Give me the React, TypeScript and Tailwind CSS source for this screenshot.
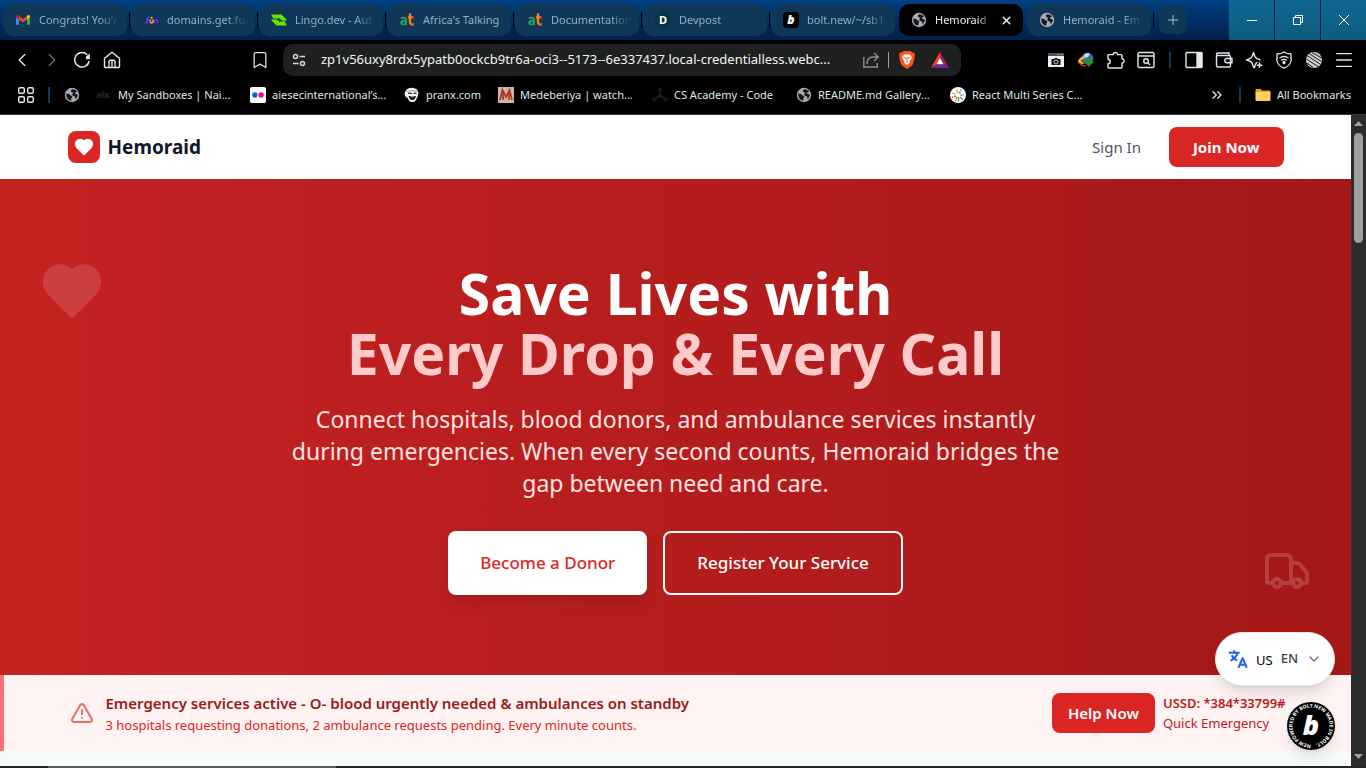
import React from 'react';
import {
  Bookmark,
  ChevronDown,
  ChevronLeft,
  ChevronRight,
  ChevronsRight,
  Menu,
  Plus,
  TriangleAlert,
  Truck,
  X,
} from 'lucide-react';

interface IconProps {
  className?: string;
}

const HeartIcon = ({ className }: IconProps) => (
  <svg viewBox="0 0 24 24" fill="currentColor" stroke="currentColor" strokeWidth="2" strokeLinecap="round" strokeLinejoin="round" className={className}>
    <path d="M19 14c1.49-1.46 3-3.21 3-5.5A5.5 5.5 0 0 0 16.5 3c-1.76 0-3 .5-4.5 2-1.5-1.5-2.74-2-4.5-2A5.5 5.5 0 0 0 2 8.5c0 2.3 1.5 4.05 3 5.5l7 7Z" />
  </svg>
);

const TranslateIcon = ({ className }: IconProps) => (
  <svg viewBox="0 0 24 24" fill="none" stroke="currentColor" strokeWidth="2.5" strokeLinejoin="round" className={className}>
    <path d="M1 4.500h13M7.500 1.500v3M11.500 4.500q-1.500 6-8.500 9.500M4.500 7.500q2 4.500 6.500 6" />
    <path d="M12.500 22.500L17.500 11l5 11.500M14.300 18.800h6.400" />
  </svg>
);

const GlobeIcon = () => (
  <svg viewBox="0 0 16 16" className="size-4 shrink-0">
    <circle cx="8" cy="8" r="7.2" fill="#a7abb1" />
    <path d="M2.3 6.6c1.6.2 3 .4 3.8 1.5.6.9 1.9.6 2.1 1.6.2 1-1.2 1.3-1 2.6l.2 1.5C4.400 13.500 2 11 2.300 6.600z" fill="#15191f" />
    <path d="M8.200 2.200c2 0 3.600.9 4.700 2.300-.5.9-1.500.6-2 1.300-.4.800.9 1.200 1.700 1.200.7.100 1.200.6 1.200 1.300-.3 1.700-1.200 3-2.300 3.900-.2-1.200.3-2-.6-2.700-.9-.6-2.300-.4-2.600-1.500-.3-1.200 1-1.400.6-2.300-.3-.7-1.600-.3-1.900-1.300-.2-.9.300-1.700 1.200-2.200z" fill="#15191f" />
  </svg>
);

const GmailIcon = () => (
  <svg viewBox="0 0 16 16" className="size-4 shrink-0">
    <path d="M1 4.500v8.300h3V7z" fill="#4285f4" />
    <path d="M15 4.500v8.300h-3V7z" fill="#34a853" />
    <path d="M12 4l1.300-.9C14.300 2.500 15 3.300 15 4.200v1L12 7.500z" fill="#fbbc04" />
    <path d="M4 4l-1.300-.9C1.700 2.500 1 3.300 1 4.200v1l3 2.300z" fill="#c5221f" />
    <path d="M4 4l4 3 4-3v3.500l-4 3-4-3z" fill="#ea4335" />
  </svg>
);

const FunIcon = () => (
  <svg viewBox="0 0 16 16" className="size-4 shrink-0" fill="none" strokeWidth="1.600">
    <path d="M4 11.500l.8-5.500Q5 4.700 6.500 5M3.300 7.500h2.700" stroke="#6a35ff" />
    <path d="M7.300 7.500v2q0 1.500 1.400 1.500t1.400-1.500v-2" stroke="#ff9c2e" />
    <circle cx="8.700" cy="5.800" r="1" fill="#ffd02e" />
    <path d="M11.800 11.500V9q0-1.500 1.400-1.500T14.600 9v2.500" stroke="#5d2ee8" />
    <circle cx="2" cy="11" r=".6" fill="#6a35ff" />
  </svg>
);

const LingoIcon = () => (
  <svg viewBox="0 0 16 16" className="size-4 shrink-0">
    <path d="M0 2.500h10.500L16 8l-2.500 1L16 13.500H5.500L0 8l2.600-1z" fill="#68e300" />
    <path d="M5.500 8L8 5.800 9 7.300l2.300.7L8.500 10.300l-.8-1.700z" fill="#10395b" />
    <path d="M2.600 7h4M13.500 9h-4" stroke="#10395b" strokeWidth=".8" />
  </svg>
);

const AfricaIcon = () => (
  <svg viewBox="0 0 16 16" className="size-4 shrink-0" fill="none">
    <path d="M1.800 6.500Q5.500 4.800 7 7.500V13M7 9Q2 8.500 2 11q.5 2.300 5 .8" stroke="#2f9a57" strokeWidth="1.900" />
    <path d="M11 1.500V10q0 3 4 2.500M8.800 5.300h6" stroke="#f58220" strokeWidth="2.300" />
    <path d="M13 4.200h2v2.300h-2zM13.500 11.400H15v2h-1.500z" fill="#e8332d" />
  </svg>
);

const DevpostIcon = () => (
  <span className="grid size-4 shrink-0 place-items-center rounded-full bg-[#083347] text-[11px] font-bold text-white">D</span>
);

const BoltIcon = () => (
  <span className="grid size-4 shrink-0 place-items-center rounded-sm bg-black text-[12px] leading-4 font-black text-white italic">b</span>
);

const AlxIcon = () => (
  <span className="w-4 shrink-0 text-[9px] font-bold text-[#26282b]">alx</span>
);

const FlickrIcon = () => (
  <svg viewBox="0 0 16 16" className="size-4 shrink-0">
    <rect width="16" height="16" rx="2" fill="#fff" />
    <circle cx="4.900" cy="8" r="2.700" fill="#0063dc" />
    <circle cx="11.100" cy="8" r="2.700" fill="#ff0084" />
  </svg>
);

const PranxIcon = () => (
  <svg viewBox="0 0 16 16" className="size-4 shrink-0">
    <path d="M1 5Q3 .8 8 .8q5.500.2 6.500 5-.5 5-3 8-1.500 1.700-4 1.200Q4.500 14 3.500 11 .5 9.500 .7 6.500z" fill="#f4f4f4" />
    <path d="M4 6.500q2-1.200 4 .2M9.500 6.500q1.500-1 3 0M5 9.500q3.500 1.500 6.500 0-.8 3-3.300 3.200Q5.700 12.500 5 9.500z" stroke="#111" strokeWidth="1" fill="#222" />
    <path d="M2 4.500Q8 2.500 13.500 4.500" stroke="#777" fill="none" strokeWidth=".7" />
  </svg>
);

const MedeberiyaIcon = () => (
  <svg viewBox="0 0 16 16" className="size-4 shrink-0">
    <rect width="16" height="16" fill="#c9b7a2" />
    <path d="M2 13L4.500 3 8 10l3.500-7L14 13M5 13V6M11 13V6" stroke="#b3342c" strokeWidth="1.700" fill="none" />
  </svg>
);

const AcademyIcon = () => (
  <svg viewBox="0 0 16 16" className="size-4 shrink-0" fill="none" stroke="#1d1f21" strokeWidth="1.300">
    <circle cx="8" cy="3" r="1.500" />
    <path d="M8 4.500v3L3 12M8 7.500l5 4.500M6 9.500h4" />
    <circle cx="2.500" cy="12.500" r="1.500" />
    <circle cx="13.500" cy="12.500" r="1.500" />
  </svg>
);

const SeriesIcon = () => (
  <svg viewBox="0 0 16 16" className="size-4 shrink-0" fill="none" strokeWidth="1.500">
    <circle cx="8" cy="8" r="8" fill="#fff" />
    <path d="M8 6.500L6.500 2.500M5.500 7L2 6" stroke="#f2b632" />
    <path d="M9.500 6.500l1.500-4M10.500 8.500l3.500-1" stroke="#3d8fe0" strokeDasharray="2 1" />
    <path d="M6 9l-4 1.500M7 10.500L5 14" stroke="#e0483d" strokeDasharray="2 1" />
    <path d="M8.500 10v4.500M10 10l3 2.500" stroke="#4fb160" />
  </svg>
);

const FolderIcon = () => (
  <svg viewBox="0 0 16 16" className="size-4 shrink-0">
    <path d="M.5 3q0-1 1-1h4l1.500 1.600h7.500q1 0 1 1V7H.5z" fill="#e0a422" />
    <path d="M.5 6q0-1 1-1h13q1 0 1 1v7q0 1-1 1h-13q-1 0-1-1z" fill="#ffd05c" />
  </svg>
);

const ReloadIcon = () => (
  <svg viewBox="0 0 18 18" className="size-[18px]" fill="none" stroke="currentColor" strokeWidth="1.500">
    <path d="M14.200 3.600A7.300 7.300 0 1 0 16.200 10" />
    <path d="M16.800 2.600v5.600h-3.600q-.8-1.700 0-3z" fill="currentColor" stroke="none" />
  </svg>
);

const HomeIcon = () => (
  <svg viewBox="0 0 18 18" className="size-[18px]" fill="none" stroke="currentColor" strokeWidth="1.400" strokeLinejoin="round">
    <path d="M1.500 7.300L9 1.200l7.500 6.100v8.200q0 1-1 1h-13q-1 0-1-1z" />
    <path d="M6 16.500V10.300q0-1 1-1h4q1 0 1 1v6.200M9 9.300v7" />
  </svg>
);

const TuneIcon = () => (
  <svg viewBox="0 0 16 16" className="size-4 shrink-0" fill="none" stroke="#d4d7da" strokeWidth="1.500">
    <circle cx="4.500" cy="4.500" r="2" />
    <path d="M8.500 4.500H14M2 11.500h5.500" />
    <circle cx="11.500" cy="11.500" r="2" />
  </svg>
);

const ShareIcon = () => (
  <svg viewBox="0 0 18 18" className="size-[18px]" fill="none" stroke="#8b8f92" strokeWidth="1.400">
    <path d="M1.800 6v10h13.500v-4" />
    <path d="M5 13q0-7 6-7h5M12 2l4.200 4L12 10" />
  </svg>
);

const BraveIcon = () => (
  <svg viewBox="0 0 16 18" className="h-[18px] w-4">
    <path d="M4.500 0h7l1.600 1.600 1.900-.2L16 4l-.6 1.800.3 1.200-2.200 7.200L8 18l-5.500-3.800L.3 7l.3-1.200L0 4l1-2.600 1.900.2z" fill="#fb5421" />
    <path d="M8 3.600l2.300-.4 2.500 2.500-.6 2.600-1.700 1.800.3 1.800L8 14l-2.800-2.100.3-1.800L3.800 8.300l-.6-2.600 2.500-2.500z" fill="#fff" />
    <path d="M4.400 6.200l2.400.8-.2 1.200M11.600 6.200L9.200 7l.2 1.200M8 6v4.300M6.500 11.400L8 10.300l1.500 1.100" stroke="#fb5421" strokeWidth=".9" fill="none" />
  </svg>
);

const BatIcon = () => (
  <svg viewBox="0 0 18 16" className="h-4 w-[18px]">
    <path d="M9 0v6L5.500 12.300 0 16z" fill="#ff4724" />
    <path d="M9 0l9 16-5.500-3.700L9 6z" fill="#9e1f63" />
    <path d="M0 16l5.500-3.700h7L18 16z" fill="#662d91" />
    <path d="M9 6l3.500 6.300h-7z" fill="#fff" />
  </svg>
);

const CaptureIcon = () => (
  <svg viewBox="0 0 16 14" className="h-3.5 w-4">
    <rect width="16" height="14" fill="#eef0f2" />
    <rect width="16" height="3" fill="#4c5266" />
    <path d="M9.500 1.500h1.500" stroke="#4ab0f0" strokeWidth="1.500" />
    <path d="M12.500 1.500H15" stroke="#f0503c" strokeWidth="1.500" />
    <path d="M3.500 6H6l.7-1h2.600l.7 1h2.500v6h-9z" fill="#101214" />
    <circle cx="8" cy="9" r="2" fill="none" stroke="#eef0f2" strokeWidth=".8" />
  </svg>
);

const DownloadManagerIcon = () => (
  <svg viewBox="0 0 16 16" className="size-4">
    <circle cx="9.500" cy="6.500" r="5.800" fill="#2f6fd0" />
    <path d="M6 2.500Q9 0 12 1.500L10 5 6.500 6z" fill="#c4dcf2" />
    <path d="M0 9q1.500-4 6-5l1 2-4 2.500 3 3-2 1q-4-.5-4-3.500z" fill="#f2b52e" />
    <path d="M1 11q3 3.500 7 2.500" stroke="#c92a20" strokeWidth="1.500" fill="none" />
    <path d="M5 7.500l3.500 1.300L13 4l.3 5 2.700.7-5.500 5.300z" fill="#2d8f1c" />
  </svg>
);

const PuzzleIcon = () => (
  <svg viewBox="0 0 18 18" className="size-[18px]" fill="none" stroke="currentColor" strokeWidth="1.400" strokeLinejoin="round">
    <path d="M3 3.600h3.300a2.100 2.100 0 1 1 4.200 0H14q1 0 1 1v3.200a2.100 2.100 0 1 1 0 4.200v4q0 1-1 1H2q-1 0-1-1v-3.400a2.200 2.200 0 0 0 0-4.400V4.600q0-1 1-1z" />
  </svg>
);

const PageSearchIcon = () => (
  <svg viewBox="0 0 18 18" className="size-[18px]" fill="none" stroke="currentColor" strokeWidth="1.400">
    <rect x="1" y="1.500" width="16" height="15" rx="1.500" />
    <path d="M1 5h16M10.800 11.800l2.200 2.200" />
    <circle cx="9" cy="10" r="2.300" />
  </svg>
);

const SidebarIcon = () => (
  <svg viewBox="0 0 18 18" className="size-[18px]" fill="none" stroke="currentColor" strokeWidth="1.400">
    <rect x="1" y="1.500" width="16" height="15" rx="1" />
    <path d="M12 2h4.500v14H12z" fill="currentColor" />
  </svg>
);

const WalletIcon = () => (
  <svg viewBox="0 0 18 18" className="size-[18px]" fill="none" stroke="currentColor" strokeWidth="1.400">
    <path d="M1.500 4.500v10q0 1.500 1.500 1.500h11.500q1 0 1-1V6q0-1.500-1.500-1.500H3Q1.500 4.500 1.500 3.300T3 2h11v2.500" />
    <path d="M17 7.500h-5.200q-2 0-2 2.100t2 2.100H17z" />
  </svg>
);

const LeoIcon = () => (
  <svg viewBox="0 0 18 18" className="size-[18px]" fill="none" stroke="currentColor" strokeWidth="1.400" strokeLinejoin="round">
    <path d="M12.500 11.200Q10.500 12 9.500 16.500 8 16 7.200 12.300 6.300 10.200 1.500 9 6.300 7.500 7.200 5.300L8.500 1.500l1.300 3.800Q11 7.800 15.500 9M14.500 11.500v5.500M11.700 14.200h5.600" />
  </svg>
);

const VpnIcon = () => (
  <svg viewBox="0 0 18 18" className="size-[18px]" fill="none" stroke="currentColor" strokeWidth="1.300" strokeLinejoin="round">
    <path d="M9 1q3 2 7 2-.3 4 .2 6-1 6-7.200 8.200Q2.800 15 1.800 9q.5-2 .2-6 4 0 7-2z" />
    <path d="M4.500 7q4.500-3 9 0M6 9.300q3-2 6 0" />
    <circle cx="9" cy="11.500" r="1" fill="currentColor" />
  </svg>
);

const StripedIcon = () => (
  <svg viewBox="0 0 16 16" className="size-4">
    <circle cx="8" cy="8" r="8" fill="#ccc" />
    <path d="M1 3.500l13 8.500M3 1.500l12.500 8M.3 7L12 14.500M6 .5l9.700 5.500M1 11l6 4.500" stroke="#1b1d20" strokeWidth="1" />
  </svg>
);

const TABS = [
  { title: "Congrats! You're", icon: <GmailIcon /> },
  { title: 'domains.get.fun', icon: <FunIcon /> },
  { title: 'Lingo.dev - Auto', icon: <LingoIcon /> },
  { title: "Africa's Talking", icon: <AfricaIcon /> },
  { title: 'Documentation', icon: <AfricaIcon /> },
  { title: 'Devpost', icon: <DevpostIcon /> },
  { title: 'bolt.new/~/sb1', icon: <BoltIcon /> },
  { title: 'Hemoraid', icon: <GlobeIcon />, active: true },
  { title: 'Hemoraid - Em', icon: <GlobeIcon /> },
];

const BOOKMARKS = [
  { title: 'My Sandboxes | Nai...', icon: <AlxIcon />, width: 'w-[154px]' },
  { title: 'aiesecinternational’s...', icon: <FlickrIcon />, width: 'w-[154px]' },
  { title: 'pranx.com', icon: <PranxIcon />, width: 'w-[94px]' },
  { title: 'Medeberiya | watch...', icon: <MedeberiyaIcon />, width: 'w-[154px]' },
  { title: 'CS Academy - Code', icon: <AcademyIcon />, width: 'w-[144px]' },
  { title: 'README.md Gallery...', icon: <GlobeIcon />, width: 'w-[154px]' },
  { title: 'React Multi Series C...', icon: <SeriesIcon />, width: 'w-[154px]' },
];

const NAV_ACTIONS = [
  { label: 'Back', icon: <ChevronLeft size={22} strokeWidth={1.5} /> },
  { label: 'Forward', icon: <ChevronRight size={22} strokeWidth={1.5} className="text-[#6d7174]" /> },
  { label: 'Reload', icon: <ReloadIcon /> },
  { label: 'Home', icon: <HomeIcon /> },
];

const EXTENSIONS = [
  { label: 'Screen capture', icon: <CaptureIcon /> },
  { label: 'Download manager', icon: <DownloadManagerIcon /> },
  { label: 'Extensions', icon: <PuzzleIcon /> },
  { label: 'Search page', icon: <PageSearchIcon /> },
];

const BROWSER_TOOLS = [
  { label: 'Sidebar', icon: <SidebarIcon /> },
  { label: 'Wallet', icon: <WalletIcon /> },
  { label: 'Assistant', icon: <LeoIcon /> },
  { label: 'VPN', icon: <VpnIcon /> },
  { label: 'Profile', icon: <StripedIcon /> },
  { label: 'Menu', icon: <Menu size={22} strokeWidth={1.5} /> },
];

const ToolButton = ({ label, icon }: { label: string; icon: React.ReactNode }) => (
  <button aria-label={label} className="grid h-8 w-[30px] shrink-0 place-items-center text-[#dfe9ee]">
    {icon}
  </button>
);

const TabStrip = () => (
  <div className="flex h-10 justify-between bg-linear-to-b from-[#003f83] to-[#01204a]">
    <div className="flex min-w-0 items-center pl-[3px]">
      {TABS.map((tab, idx) => (
        <div key={idx} className="flex w-32 shrink-0 items-center">
          <button
            className={`flex h-8 min-w-0 flex-1 items-center gap-2 rounded-[10px] pr-2 pl-3 text-[11px] ${
              tab.active ? 'bg-black text-[#e3edf2]' : 'bg-[#0f3858] text-[#8fb0c4]'
            }`}
          >
            {tab.icon}
            <span
              className={`min-w-0 flex-1 overflow-hidden text-left whitespace-nowrap ${
                tab.title === "Africa's Talking" ? '' : '[mask-image:linear-gradient(to_right,black_75%,transparent)]'
              }`}
            >
              {tab.title}
            </span>
            {tab.active && <X size={13} strokeWidth={3} className="mr-0.5 shrink-0" />}
          </button>
          <span className="flex w-1 justify-center">
            <span className={`h-4 w-px ${tab.active || idx === 6 ? 'bg-transparent' : 'bg-black'}`} />
          </span>
        </div>
      ))}
      <button aria-label="New tab" className="ml-1 grid size-7 shrink-0 place-items-center rounded-lg bg-[#0f3858] text-[#a9c2d0]">
        <Plus size={16} strokeWidth={1.5} />
      </button>
    </div>
    <div className="flex gap-px bg-[#022640] text-white">
      <button aria-label="Minimize" className="grid w-[45px] place-items-center bg-linear-to-b from-[#106794] to-[#0e5c7c]">
        <span className="h-px w-2.5 bg-white" />
      </button>
      <button aria-label="Restore" className="grid w-[45px] place-items-center bg-linear-to-b from-[#106794] to-[#0e5c7c]">
        <svg viewBox="0 0 10 10" className="size-2.5" fill="none" stroke="currentColor">
          <path d="M.5 2.500h7v7h-7zM2.500 2.500v-2h7v7h-2" />
        </svg>
      </button>
      <button aria-label="Close" className="grid w-[45px] place-items-center bg-linear-to-b from-[#106794] to-[#0e5c7c]">
        <svg viewBox="0 0 10 10" className="size-2.5" fill="none" stroke="currentColor">
          <path d="M0 0l10 10M10 0L0 10" />
        </svg>
      </button>
    </div>
  </div>
);

const Toolbar = () => (
  <div className="flex h-10 items-center px-[7px]">
    <div className="flex w-[268px] shrink-0">
      {NAV_ACTIONS.map((action) => (
        <ToolButton key={action.label} {...action} />
      ))}
      <span className="flex-1" />
      <ToolButton label="Bookmark this page" icon={<Bookmark size={20} strokeWidth={1.5} />} />
    </div>
    <div className="ml-2 flex h-8 min-w-0 flex-1 items-center rounded-[10px] bg-[#1f2121] px-2">
      <TuneIcon />
      <input
        aria-label="Address"
        className="ml-[14px] min-w-0 flex-1 bg-transparent text-[13px] text-[#f2f5f6] outline-none"
        defaultValue="zp1v56uxy8rdx5ypatb0ockcb9tr6a-oci3--5173--6e337437.local-credentialless.webc..."
      />
      <button aria-label="Share" className="ml-4">
        <ShareIcon />
      </button>
      <span className="mx-2 h-4 w-px bg-[#9da1a4]" />
      <button aria-label="Shields" className="ml-0.5">
        <BraveIcon />
      </button>
      <button aria-label="Rewards" className="mr-1 ml-4">
        <BatIcon />
      </button>
    </div>
    <div className="flex shrink-0 items-center pl-20">
      {EXTENSIONS.map((ext) => (
        <ToolButton key={ext.label} {...ext} />
      ))}
      <span className="mx-2 h-4 w-0.5 bg-[#113a58]" />
      {BROWSER_TOOLS.map((tool) => (
        <ToolButton key={tool.label} {...tool} />
      ))}
    </div>
  </div>
);

const BookmarksBar = () => (
  <div className="flex h-[34px] items-center pr-[15px] pb-1 pl-[18px] text-[11px] text-[#dfe9ee]">
    <button aria-label="All apps">
      <svg viewBox="0 0 16 16" className="size-4" fill="none" stroke="currentColor" strokeWidth="1.400">
        <rect x=".7" y=".7" width="5.600" height="5.600" rx="1.300" />
        <rect x="9.700" y=".7" width="5.600" height="5.600" rx="1.300" />
        <rect x=".7" y="9.700" width="5.600" height="5.600" rx="1.300" />
        <rect x="9.700" y="9.700" width="5.600" height="5.600" rx="1.300" />
      </svg>
    </button>
    <span className="mx-[14px] h-4 w-0.5 bg-[#113a58]" />
    <a href="#" aria-label="Site" className="mr-4">
      <GlobeIcon />
    </a>
    {BOOKMARKS.map((mark) => (
      <a key={mark.title} href="#" className={`flex shrink-0 items-center gap-1.5 whitespace-nowrap ${mark.width}`}>
        {mark.icon}
        {mark.title}
      </a>
    ))}
    <span className="flex-1" />
    <button aria-label="More bookmarks">
      <ChevronsRight size={16} strokeWidth={2} />
    </button>
    <span className="mx-[14px] h-4 w-0.5 bg-[#113a58]" />
    <a href="#" className="flex items-center gap-1.5 whitespace-nowrap">
      <FolderIcon />
      All Bookmarks
    </a>
  </div>
);

const Header = () => (
  <header className="bg-white">
    <div className="mx-auto flex h-16 max-w-7xl items-center justify-between px-8">
      <a href="#" className="flex items-center gap-2">
        <span className="grid size-8 place-items-center rounded-lg bg-[#dc2626]">
          <HeartIcon className="size-5 text-white" />
        </span>
        <span className="text-[19px] font-bold text-[#111827]">Hemoraid</span>
      </a>
      <div className="flex items-center gap-7">
        <a href="#" className="text-[15px] text-[#4b5563]">Sign In</a>
        <button className="h-10 rounded-lg bg-[#dc2626] px-6 text-[15px] font-bold text-white">Join Now</button>
      </div>
    </div>
  </header>
);

const Hero = () => (
  <section className="relative bg-linear-to-r from-[#c62222] to-[#a51818] py-20 text-center">
    <HeartIcon className="absolute top-20 left-10 size-16 text-white opacity-13" />
    <Truck size={48} className="absolute right-10 bottom-20 text-white opacity-17" />
    <h1 className="pt-1 text-[57px] leading-[60px] font-bold text-white">
      Save Lives with
      <span className="block text-[#fecaca]">Every Drop & Every Call</span>
    </h1>
    <p className="mx-auto mt-5 max-w-3xl text-[23px] leading-8 text-[#fee2e2]">
      Connect hospitals, blood donors, and ambulance services instantly during emergencies. When every second counts, Hemoraid bridges the gap between need and care.
    </p>
    <div className="mt-8 flex justify-center gap-4">
      <button className="h-16 rounded-lg bg-white px-8 text-[17px] font-medium text-[#dc2626] shadow-lg">Become a Donor</button>
      <button className="h-16 rounded-lg border-2 border-white px-8 text-[17px] font-medium text-white">Register Your Service</button>
    </div>
  </section>
);

const EmergencyBanner = () => (
  <section className="border-l-4 border-[#f87171] bg-[#fef2f2]">
    <div className="mx-auto flex h-[76px] max-w-7xl items-center justify-between px-8">
      <div className="flex items-center gap-3">
        <TriangleAlert size={24} className="text-[#ea6c6c]" />
        <div>
          <p className="text-[15px] leading-6 font-semibold text-[#991b1b]">
            Emergency services active - O- blood urgently needed & ambulances on standby
          </p>
          <p className="text-[13px] leading-5 text-[#dc2626]">
            3 hospitals requesting donations, 2 ambulance requests pending. Every minute counts.
          </p>
        </div>
      </div>
      <div className="flex items-center gap-2">
        <button className="h-10 rounded-lg bg-[#dc2626] px-4 text-[15px] font-semibold text-white">Help Now</button>
        <div className="text-[13px] leading-5 text-[#b91c1c]">
          <p className="font-semibold">USSD: *384*33799#</p>
          <p>Quick Emergency</p>
        </div>
      </div>
    </div>
  </section>
);

const LanguagePicker = () => (
  <button className="absolute right-4 bottom-20 flex h-[54px] items-center gap-2 rounded-full border border-[#e5e7eb] bg-white px-3 shadow-lg">
    <TranslateIcon className="size-5 text-[#2563eb]" />
    <span className="pt-1 text-[13px] text-black">US</span>
    <span className="text-[13px] font-medium text-[#374151]">EN</span>
    <ChevronDown size={16} className="text-[#6b7280]" />
  </button>
);

const BoltBadge = () => (
  <a href="#" aria-label="Powered by Bolt" className="absolute right-4 bottom-4 rounded-full shadow-lg">
    <svg viewBox="0 0 48 48" className="size-12">
      <circle cx="24" cy="24" r="24" fill="#000" />
      <defs>
        <path id="badge-ring" d="M24 42.500a18.500 18.500 0 1 1 .1 0" />
      </defs>
      <text fill="#fff" fontSize="5" fontWeight="700">
        <textPath href="#badge-ring">NEW POWERED BY BOLT.NEW MADE IN BOLT.</textPath>
      </text>
      <text x="24" y="33" textAnchor="middle" fill="#fff" fontSize="27" fontWeight="900" fontStyle="italic">b</text>
    </svg>
  </a>
);

const Scrollbar = () => (
  <div className="flex w-[15px] shrink-0 flex-col items-center bg-[#2c2c2c] text-[#9f9f9f]">
    <svg viewBox="0 0 15 18" className="h-[18px] w-[15px]">
      <path d="M3 11l4.500-5 4.500 5z" fill="currentColor" />
    </svg>
    <span className="h-[110px] w-[9px] rounded-full bg-[#9f9f9f]" />
    <span className="flex-1" />
    <svg viewBox="0 0 15 18" className="h-[18px] w-[15px]">
      <path d="M3 6l4.500 5L12 6z" fill="currentColor" />
    </svg>
  </div>
);

const App: React.FC = () => {
  return (
    <div className="flex h-screen flex-col overflow-hidden bg-black font-['Noto_Sans',sans-serif]">
      <TabStrip />
      <Toolbar />
      <BookmarksBar />
      <div className="flex min-h-0 flex-1 border-t border-[#343838]">
        <main className="relative min-w-0 flex-1 overflow-hidden bg-[#f9fafb]">
          <Header />
          <Hero />
          <EmergencyBanner />
          <LanguagePicker />
          <BoltBadge />
        </main>
        <Scrollbar />
      </div>
      <div className="flex h-0.5 shrink-0 bg-[#1c2829]">
        <span className="ml-12 w-72 bg-[#56615f]" />
      </div>
    </div>
  );
};

export default App;
